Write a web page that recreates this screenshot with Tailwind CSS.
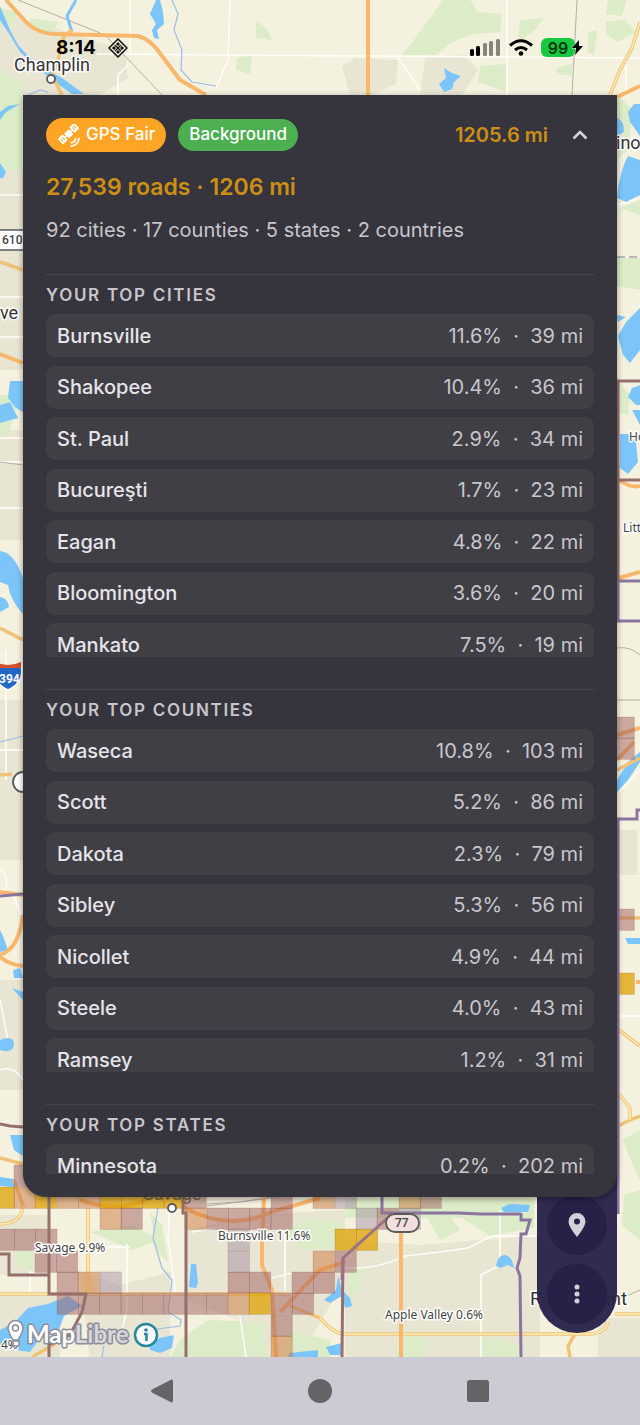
<!DOCTYPE html>
<html lang="en">
<head>
  <meta charset="UTF-8" />
  <meta name="viewport" content="width=device-width, initial-scale=1.0" />
  <title>Road Coverage</title>
  <script src="https://cdn.jsdelivr.net/npm/@tailwindcss/browser@4"></script>
</head>
<body class="flex min-h-screen flex-col bg-[#cccad2] font-['Inter',sans-serif]">
  <main class="relative isolate flex-1 overflow-hidden">

    <!-- MAP -->
    <svg class="absolute inset-0 -z-10 h-full w-full" viewBox="0 0 640 1357" preserveAspectRatio="xMidYMin slice" role="img" aria-label="Map">
      <rect width="640" height="1357" fill="#f5f1df" />

      <!-- built-up areas -->
      <g fill="#e9e5d3">
        <path d="M0 12L60 30L125 50L128 78L100 95H0Z" />
        <path d="M342 66L355 58L398 60L396 84L372 95H350Z" />
        <path d="M425 58L465 55L478 70L462 95H420Z" />
        <path d="M0 170H23V370H0Z" />
        <path d="M0 430H23V540H0ZM0 700H23V860H0ZM0 980H23V1090H0Z" />
        <path d="M0 1215H48V1275H0ZM0 1293H60V1357H0ZM78 1270L120 1285L170 1272V1357H90Z" />
        <path d="M186 1230L250 1215L345 1210V1280L300 1357H250L240 1320L186 1300Z" />
        <path d="M345 1240L420 1245L540 1235V1357H345Z" />
        <path d="M598 1318H640V1357H598ZM619 830H637V875H619Z" />
      </g>
      <!-- parks -->
      <g fill="#dcebc8">
        <path d="M0 8L18 12L12 28L0 22ZM30 18L58 22L52 34L34 30ZM0 70L22 82L23 95H0Z" />
        <path d="M442 0H470L478 12L502 14L500 32L472 34L452 42L436 55H402L414 40L424 26L432 16Z" />
        <path d="M520 20L544 18L535 30L518 42ZM608 0H626L622 16L606 14ZM606 22L624 20L636 32L618 42L606 34ZM480 66L506 64L506 92L478 82ZM556 68L572 64V76L558 74ZM588 32L597 30L594 55L588 52Z" />
        <path d="M237 58L252 56L250 74L236 70ZM256 20L266 28L272 40L256 38Z" />
        <path d="M0 95H22V170H0Z" />
        <path d="M617 95L633 110L628 150L617 160ZM617 258H640V290L617 286ZM619 382L630 395L628 415L619 412ZM620 208L640 200V215ZM0 395H20L8 435H0Z" />
        <path d="M18 1249L34 1250L30 1272L15 1262ZM72 1225L90 1232L132 1225L160 1240L132 1250L100 1236Z" />
        <path d="M150 1212L162 1225L168 1262L156 1250ZM180 1340L208 1320L262 1322L268 1357H170Z" />
        <path d="M285 1230L312 1218L345 1224L330 1250H300ZM350 1270L364 1266L360 1290L348 1300ZM424 1212L450 1216L460 1230L440 1240ZM345 1198H534V1228L490 1236L462 1218H345Z" />
        <path d="M624 1195L640 1190V1240L622 1225ZM284 1330L330 1340V1357H284ZM622 1140L640 1130V1180Z" />
        <path d="M400 1330L430 1340L422 1357H396ZM480 1335L518 1345V1357H480Z" />
      </g>
      <!-- minor roads -->
      <g fill="none" stroke="#fffefa" stroke-width="1.5">
        <path d="M130 0V52M97 54L640 58M230 0L228 60L216 88M507 0V95M397 56L420 90M626 58V95M118 95V75L128 65" />
        <path d="M0 195H23M0 297H23M0 337H23M0 438H23M0 462H23M0 508H23M6 650V780M0 750H23M0 870C10 875 8 890 0 895M12 892L23 920M0 1000L8 1040M0 1070Q14 1065 23 1080" />
        <path d="M619 792L640 770M619 1016H640M617 205L640 198" />
        <path d="M170 1200L168 1240L176 1294M127 1244V1310L122 1330M45 1276L30 1272V1294M100 1247H130M192 1232L215 1228M285 1230V1290M272 1278L292 1273" />
        <path d="M345 1268C380 1270 400 1258 405 1256L440 1252L468 1248L492 1236H536M500 1210V1258M481 1357V1275L500 1265M240 1316L246 1357" />
      </g>
      <!-- rail and trails -->
      <g fill="none" stroke="#b4b0a6" stroke-width="1">
        <path d="M18 0L105 35L162 95M577 0L572 95M0 462L23 465M617 648Q630 646 640 655M617 700H640" />
        <path d="M207 1204L240 1202L280 1196M622 1298L640 1290M207 1206L270 1198" />
        <path d="M617 257H640" stroke="#a9a2b0" stroke-width="1.5" stroke-dasharray="8 4" />
      </g>
      <!-- streams -->
      <g fill="none" stroke="#9dbde8" stroke-width="1.2">
        <path d="M172 0L178 14L174 30L182 50L181 70L192 82L216 86M0 742L23 736M28 95L40 90L48 92" />
        <path d="M158 1208L153 1238L162 1268L172 1280L168 1312L181 1320L180 1326L150 1330L142 1345M102 1357L104 1345" />
      </g>
      <!-- water -->
      <g fill="#7cc5fb">
        <path d="M156 0H160L163 12L164 24L157 30L159 39L154 38L152 30L156 24L150 14Z" />
        <path d="M444 68L452 73L461 76L454 82L452 89L444 92L439 84L446 78Z" />
        <path d="M0 6L10 30L18 45L28 56L44 68L62 78L84 94H72L52 80L36 66L20 52L8 32L0 20Z" />
        <path d="M634 104H640V136L630 122L628 112ZM617 118Q624 120 624 132L617 136Z" />
        <path d="M628 156L640 160V195L626 202L617 198Q620 170 628 156Z" />
        <path d="M617 315L626 317L618 322ZM640 308L626 322L618 336L623 355L630 363L640 350Z" />
        <path d="M640 385L632 388L628 397L636 405H640ZM620 434L628 434L636 442L638 462L628 474L620 468ZM632 410H640V425Z" />
        <path d="M0 163L6 172L3 178H0ZM0 112L8 106L20 104L6 112L0 120Z" />
        <path d="M10 381H23V412L16 408L8 398ZM0 405L10 402L18 418L0 423Z" />
        <path d="M0 551Q14 552 23 578V614Q10 600 8 585L0 582ZM0 597Q8 598 9 607L0 612Z" />
        <path d="M0 930L3 936L8 950L0 952ZM13 970L20 968L23 978L14 978ZM12 988L23 992V1000ZM0 1040Q14 1034 14 1045Q12 1054 0 1050Z" />
        <path d="M10 1135H23V1156L14 1150ZM0 1177L14 1179V1187L0 1186Z" />
        <path d="M640 752L628 762L617 780V792L628 780L640 762Z" />
        <path d="M625 938H640V944L628 944Z" />
        <path d="M191 1264H196L198 1283L196 1288L189 1287L190 1276Z" />
        <path d="M0 1330L15 1322L28 1308L48 1304L68 1296L82 1306L64 1316L58 1332L40 1338L30 1352L0 1348Z" />
        <path d="M150 1342L160 1338L174 1335L172 1348L160 1353L150 1350Z" />
        <path d="M501 1208L510 1204L530 1205L528 1212H504Z" />
        <path d="M496 1266Q498 1255 505 1255Q512 1256 514 1268L508 1265L500 1268Z" />
        <path d="M338 1276L342 1290L350 1298L352 1306L345 1308L342 1296L330 1303L324 1300L336 1290ZM326 1347L342 1343L342 1355H330ZM290 1353L318 1350V1357H288Z" />
      </g>
      <path d="M76 0L67 16L72 32" fill="none" stroke="#7cc5fb" stroke-width="3" />

      <!-- secondary roads -->
      <g fill="none" stroke="#f0c275" stroke-width="3.5">
        <path d="M72 30L64 36L58 60L52 75L62 95M640 22L632 48L620 70L610 95M0 262L23 270M0 628L23 640M0 775L12 774M0 1158L23 1164" />
        <path d="M0 1224Q22 1224 23 1205L14 1180M88 1208V1295M0 1294H290M320 1318Q332 1332 342 1334H590Q606 1333 608 1322M575 1334L568 1346L570 1357M615 1314H640M32 1357L55 1344M290 1306L320 1318" />
        <path d="M619 1030L640 1046M619 1094L630 1108V1120L618 1126M630 1120L640 1116M617 770L640 758M617 918H640" />
      </g>
      <g fill="none" stroke="#fdeeb6" stroke-width="1.5">
        <path d="M640 22L632 48L620 70L610 95M0 1224Q22 1224 23 1205M88 1208V1295M0 1294H290M320 1318Q332 1332 342 1334H590Q606 1333 608 1322M615 1314H640M619 1030L640 1046M619 1094L630 1108V1120" />
      </g>
      <!-- highways -->
      <g fill="none" stroke="#f8b76b" stroke-width="4">
        <path d="M6 0L28 24Q40 34 55 34L138 36Q152 40 162 56L180 80L206 95M368 0V95M617 97L640 86" />
        <path d="M0 354L23 363M0 892L23 895M23 915C20 935 15 950 0 955M0 957Q10 965 23 966M617 735L640 728M617 760L634 742M636 982H640M619 480Q630 488 640 486M619 578L640 572" />
        <path d="M264 1197L262 1240V1265L272 1290L276 1357M80 1200Q120 1214 150 1198M185 1208Q230 1232 271 1212L320 1198M280 1312L320 1270L345 1262M401 1225V1357" />
      </g>

      <!-- tiles of driven area -->
      <g id="tiles"></g>

      <!-- city and county borders -->
      <g fill="none" stroke="#96706f" stroke-width="3">
        <path d="M49 1197V1294H86L82 1312L70 1335L49 1345M0 1254H9V1275H49M49 1338V1357M183 1190V1213H186V1357M0 1124L10 1126L23 1127" />
        <path d="M617 381H640M618 381V480H640M618 480V581M342 1357L343 1258" />
      </g>
      <g fill="none" stroke="#8b759f" stroke-width="3">
        <path d="M618 581H640M618 581V621H640M640 810H637V819H618V1200M0 896L23 894" />
        <path d="M382 1195V1213H458L480 1214H521M521 1213V1220H530L526 1234H521L520 1258L517 1268L520 1276L521 1357M618 1200V1214" />
        <path d="M393 1213L343 1258L342 1280" stroke="#9b7384" />
      </g>

      <!-- place markers -->
      <g fill="#fff" stroke="#5a5a5a" stroke-width="1.8">
        <circle cx="51" cy="79" r="4" />
        <circle cx="172" cy="1208" r="4" />
        <rect x="-20" y="230" width="56" height="20" stroke-width="1.5" />
        <rect x="386" y="1214" width="33" height="18" rx="9" fill="#f0dfdd" />
        <circle cx="23" cy="782" r="10" />
      </g>
      <path d="M-6 666H21Q25 682 8 690Q-8 682 -6 666Z" fill="#2268c4" stroke="#fff" stroke-width="1.5" />
      <path d="M-5 662Q8 668 21 662V668H-5Z" fill="#d8502c" />

      <!-- labels -->
      <g fill="#333" stroke="#fff" stroke-width="3" stroke-linejoin="round" paint-order="stroke" font-family="Roboto, sans-serif" font-size="18">
        <text x="14" y="71">Champlin</text>
        <text x="616" y="149">ino</text>
        <text x="0" y="319">ve</text>
        <text x="143" y="1200" stroke="none" fill="#7a6a4c">Savage</text>
        <text x="530" y="1305" font-size="19">Rosemount</text>
      </g>
      <g fill="#444" stroke="#fff" stroke-width="3" stroke-linejoin="round" paint-order="stroke" font-family="Noto Sans, sans-serif" font-size="12">
        <text x="35" y="1252">Savage 9.9%</text>
        <text x="218" y="1240">Burnsville 11.6%</text>
        <text x="385" y="1319">Apple Valley 0.6%</text>
        <text x="629" y="441">Ho</text>
        <text x="623" y="532">Litt</text>
        <text x="1" y="1349">4%</text>
      </g>
      <g font-family="Roboto, sans-serif" font-size="12" font-weight="500" fill="#444">
        <text x="2" y="244">610</text>
        <text x="395" y="1227">77</text>
        <text x="-1" y="683" fill="#fff" font-weight="700">394</text>
      </g>

      <!-- attribution -->
      <g fill="#fff" stroke="#8d8d99" stroke-width="1.5">
        <path d="M13 1340Q8 1332 8 1328A7.500 7.500 0 0 1 23 1328Q23 1332 18 1340Z" />
        <circle cx="15.500" cy="1328" r="3" />
        <path d="M13 1341H19V1346H13Z" />
        <text x="27" y="1343" font-family="Lato, sans-serif" font-size="24" font-weight="700" stroke-width="3" stroke-linejoin="round" paint-order="stroke">Map<tspan fill="#d8d6dc">Libre</tspan></text>
      </g>
      <circle cx="146" cy="1335" r="11" fill="#fff" fill-opacity=".8" stroke="#27869c" stroke-width="2.5" />
      <path d="M144 1334H146.500V1341" fill="none" stroke="#27869c" stroke-width="2.500" />
      <circle cx="146" cy="1330" r="1.800" fill="#27869c" />
    </svg>

    <!-- STATUS BAR -->
    <header class="flex h-[95px] items-center justify-between pl-14 pr-14 text-black">
      <div class="flex items-center gap-3">
        <time class="text-[19px] font-bold leading-6">8:14</time>
        <svg class="size-5" viewBox="0 0 20 20" fill="none" stroke="#111" aria-hidden="true">
          <path d="M10 1L19 10L10 19L1 10Z" stroke-width="1.500" stroke-linejoin="round" />
          <path d="M10 4L12 6L10 8L8 6ZM6 8L8 10L6 12L4 10ZM14 8L16 10L14 12L12 10ZM10 12L12 14L10 16L8 14Z" fill="#111" stroke="none" />
          <path d="M7 7L13 13M13 7L7 13" stroke-width="1.200" />
        </svg>
      </div>
      <div class="flex items-center gap-2">
        <svg class="h-[17px] w-8" viewBox="0 0 32 17" aria-label="Signal">
          <g fill="#000"><rect x="1" y="10" width="4" height="7" rx="1.500" /><rect x="7" y="7" width="4" height="10" rx="1.500" /></g>
          <g fill="#85837b"><rect x="14" y="4" width="4" height="13" rx="1.500" /><rect x="20" y="2" width="4" height="15" rx="1.500" /><rect x="27" y="0" width="4" height="17" rx="1.500" /></g>
        </svg>
        <svg class="h-[17px] w-6" viewBox="0 0 24 17" fill="none" stroke="#000" stroke-width="3" aria-label="Wi-Fi">
          <path d="M1 6.500Q12 -3 23 6.500M6 11Q12 6 18 11" />
          <circle cx="12" cy="14.500" r="2.300" fill="#000" stroke="none" />
        </svg>
        <div class="flex items-center">
          <span class="flex h-[19px] w-[34px] items-center justify-center rounded-md bg-[#18c840] text-base font-semibold text-[#04380f]">99</span>
          <svg class="-ml-1 h-[15px] w-[13px]" viewBox="0 0 13 15" aria-label="Charging"><path d="M8 0L1 8H5L4 15L12 6H8Z" stroke="#f5f1df" stroke-width="1" paint-order="stroke" /></svg>
        </div>
      </div>
    </header>

    <!-- STATS PANEL -->
    <section class="relative z-10 mx-[23px] rounded-b-[23px] bg-[#36343c] p-[23px] text-[#c8c6cc] shadow-[0_2px_6px_rgba(0,0,0,0.4)]">
      <div class="flex h-[34px] items-center">
        <span class="flex h-[34px] items-center rounded-full bg-[#ffa526] pl-[11px] pr-[11px] text-[17px] font-medium text-white">
          <svg class="mr-1.5 size-[23px]" viewBox="0 0 24 24" fill="#fff" aria-hidden="true">
            <path d="M12 7.500L16.500 12L12 16.500L7.500 12Z" transform="translate(0 -2)" />
            <g transform="rotate(-45 12 10)">
              <rect x="0" y="6" width="7" height="8" rx="1.500" />
              <rect x="17" y="6" width="7" height="8" rx="1.500" />
              <path d="M7 10H17" stroke="#fff" stroke-width="1.600" />
              <path d="M2.300 8V12M4.700 8V12M19.300 8V12M21.700 8V12" stroke="#ffa526" stroke-width="1" />
              <path d="M12 8V14" stroke="#fff" stroke-width="6" />
            </g>
            <path d="M15 19.500A5.500 5.500 0 0 0 19.500 15M15 23A9 9 0 0 0 23 15" fill="none" stroke="#fff" stroke-width="1.800" stroke-linecap="round" />
          </svg>
          GPS Fair
        </span>
        <span class="ml-3 flex h-8 items-center rounded-full bg-[#4caf50] px-[11px] text-[17px] font-medium text-white">Background</span>
        <strong class="ml-auto text-xl font-semibold text-[#cc8f15]">1205.6 mi</strong>
        <button type="button" aria-label="Collapse" class="ml-[18px] flex size-7 items-center justify-center">
          <svg class="h-[10px] w-4" viewBox="0 0 16 10" fill="none" stroke="#d6d4da" stroke-width="2.500"><path d="M1.500 8.500L8 2L14.500 8.500" /></svg>
        </button>
      </div>

      <h1 class="mt-5 text-[23px] font-semibold leading-[30px] text-[#cc8f15]">27,539 roads · 1206 mi</h1>
      <p class="mt-3.5 text-xl leading-[28px]">92 cities · 17 counties · 5 states · 2 countries</p>

      <div class="mt-[30px] grid gap-8">
        <section class="border-t border-[#47464c]">
          <h2 class="h-[39px] pt-2 text-[17px] font-semibold leading-6 tracking-widest">YOUR TOP CITIES</h2>
          <div class="h-[343px] overflow-hidden"><ul id="cities" class="flex h-[352px] flex-col justify-between"></ul></div>
        </section>
        <section class="border-t border-[#47464c]">
          <h2 class="h-[39px] pt-2 text-[17px] font-semibold leading-6 tracking-widest">YOUR TOP COUNTIES</h2>
          <div class="h-[343px] overflow-hidden"><ul id="counties" class="flex h-[352px] flex-col justify-between"></ul></div>
        </section>
        <section class="border-t border-[#47464c]">
          <h2 class="h-[39px] pt-2 text-[17px] font-semibold leading-6 tracking-widest">YOUR TOP STATES</h2>
          <div class="h-[30px] overflow-hidden"><ul id="states"></ul></div>
        </section>
      </div>
    </section>

    <!-- MAP TOOLS -->
    <div class="-mt-10 mb-6 mr-[23px] ml-auto flex w-20 flex-col items-center rounded-b-[40px] bg-[#2a244c]/97 pb-[9px] pt-[38px]">
      <button type="button" aria-label="Places" class="flex h-[60px] w-[60px] items-center justify-center rounded-full bg-[#272147]">
        <svg class="h-6 w-[18px]" viewBox="0 0 18 24"><path d="M9 0A8.500 8.500 0 0 0 .5 8.500C.5 14 9 24 9 24S17.500 14 17.500 8.500A8.500 8.500 0 0 0 9 0Z" fill="#d2d0d8" /><circle cx="9" cy="8.500" r="3" fill="#28224a" /></svg>
      </button>
      <button type="button" aria-label="More" class="mt-[9px] flex h-[60px] w-[60px] items-center justify-center rounded-full bg-[#272147]">
        <svg class="h-5 w-2" viewBox="0 0 8 20" fill="#d2d0d8"><circle cx="4" cy="3" r="2.500" /><circle cx="4" cy="10" r="2.500" /><circle cx="4" cy="17" r="2.500" /></svg>
      </button>
    </div>
  </main>

  <!-- SYSTEM NAVIGATION -->
  <nav class="flex h-[68px] items-center justify-center gap-[110px] bg-[#cccad2]">
    <button type="button" aria-label="Back" class="flex size-12 items-center justify-center">
      <svg class="size-6" viewBox="0 0 24 24" fill="#646466"><path d="M21 .8Q23 0 23 2.500V21.500Q23 24 21 23.200L2 13.500Q0 12 2 10.500Z" /></svg>
    </button>
    <button type="button" aria-label="Home" class="flex size-12 items-center justify-center">
      <svg class="size-6" viewBox="0 0 24 24" fill="#646466"><circle cx="12" cy="12" r="12" /></svg>
    </button>
    <button type="button" aria-label="Recents" class="flex size-12 items-center justify-center">
      <svg class="size-6" viewBox="0 0 24 24" fill="#646466"><rect x="1" y="1" width="22" height="22" rx="2.500" /></svg>
    </button>
  </nav>

  <!-- SCRIPT -->
  <script>
    const lists = {
      cities: [
        ['Burnsville', '11.6%', '39 mi'],
        ['Shakopee', '10.4%', '36 mi'],
        ['St. Paul', '2.9%', '34 mi'],
        ['Bucureşti', '1.7%', '23 mi'],
        ['Eagan', '4.8%', '22 mi'],
        ['Bloomington', '3.6%', '20 mi'],
        ['Mankato', '7.5%', '19 mi']
      ],
      counties: [
        ['Waseca', '10.8%', '103 mi'],
        ['Scott', '5.2%', '86 mi'],
        ['Dakota', '2.3%', '79 mi'],
        ['Sibley', '5.3%', '56 mi'],
        ['Nicollet', '4.9%', '44 mi'],
        ['Steele', '4.0%', '43 mi'],
        ['Ramsey', '1.2%', '31 mi']
      ],
      states: [['Minnesota', '0.2%', '202 mi']]
    };

    Object.entries(lists).forEach(([id, rows]) => {
      document.getElementById(id).innerHTML = rows.map(([name, share, miles]) => `
        <li class="flex h-[43px] items-center justify-between rounded-[9px] bg-[#403f45] px-[11px] text-xl">
          <span class="font-medium text-[#e6e4ea]">${name}</span>
          <span class="whitespace-pre">${share}  ·  ${miles}</span>
        </li>`).join('');
    });

    // [x, y, colour, number of tiles across]
    const colours = { p: '#a0605f', o: '#cc7a3c', y: '#dca000', l: '#8a6a90' };
    const tiles = [
      [14, 1165, 'p', 1], [-7, 1187, 'y', 1], [14, 1187, 'o', 1], [35, 1187, 'y', 1], [57, 1187, 'o', 2],
      [100, 1187, 'y', 4], [185, 1187, 'p', 1], [271, 1187, 'p', 1], [313, 1187, 'o', 1], [335, 1187, 'l', 1],
      [399, 1187, 'o', 1], [420, 1187, 'p', 1],
      [100, 1208, 'o', 1], [121, 1208, 'p', 1], [185, 1208, 'o', 1], [207, 1208, 'p', 4],
      [356, 1208, 'l', 1], [377, 1208, 'p', 1], [399, 1208, 'l', 1],
      [-7, 1229, 'p', 3], [228, 1229, 'l', 1], [335, 1229, 'y', 2],
      [35, 1251, 'p', 2], [228, 1251, 'l', 1], [313, 1251, 'o', 1], [335, 1251, 'p', 1],
      [57, 1272, 'p', 1], [78, 1272, 'o', 1], [100, 1272, 'l', 1], [228, 1272, 'p', 2], [292, 1272, 'p', 2],
      [57, 1293, 'p', 8], [228, 1293, 'o', 1], [249, 1293, 'y', 1], [271, 1293, 'p', 2],
      [271, 1315, 'p', 1], [271, 1336, 'o', 1],
      [613, 717, 'p', 1], [613, 738, 'p', 1], [613, 909, 'p', 1], [613, 973, 'y', 1]
    ];
    let html = '';
    tiles.forEach(([x, y, c, n]) => {
      for (let i = 0; i < n; i++) {
        html += `<rect x="${x + i * 21.35}" y="${y}" width="21.35" height="21.35" fill="${colours[c]}" fill-opacity="${c === 'y' ? 0.75 : c === 'l' ? 0.35 : 0.5}" stroke="#7a4444" stroke-opacity=".25" stroke-width=".7" />`;
      }
    });
    document.getElementById('tiles').innerHTML = html;
  </script>
</body>
</html>
